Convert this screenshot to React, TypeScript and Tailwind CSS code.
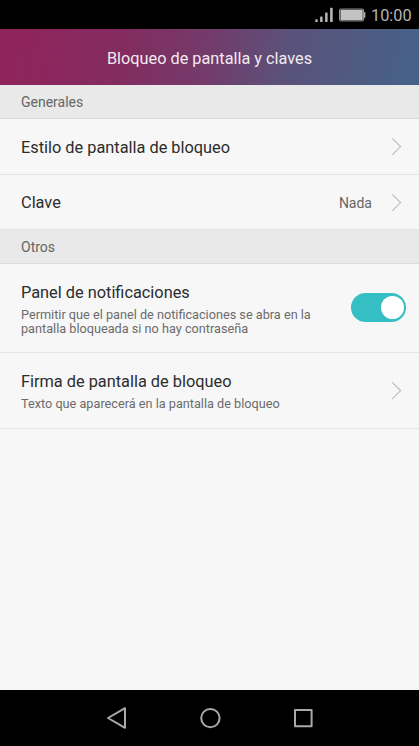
import React from 'react';
import { clsx } from 'clsx';

type SettingRowProps = {
  title: string;
  summary?: string;
  value?: string;
  className?: string;
  children?: React.ReactNode;
};

const Chevron = () => (
  <svg className="h-[19px] w-[11px] shrink-0" viewBox="0 0 11 19" fill="none" aria-hidden="true">
    <path d="M1.2 1.3 9.6 9.6 1.2 17.9" stroke="#b9b9b9" strokeWidth="1.1" />
  </svg>
);

const StatusBar = () => (
  <div className="flex h-[29px] shrink-0 items-center justify-end bg-black pr-[7px] text-[#b5b5b5]">
    <svg className="h-[16px] w-[18px]" viewBox="0 0 18 16" fill="currentColor" aria-hidden="true">
      <rect x="0.3" y="12.2" width="2.4" height="2.8" rx="0.5" />
      <rect x="5.1" y="9.4" width="2.5" height="5.6" rx="0.5" />
      <rect x="10.1" y="5.4" width="2.5" height="9.6" rx="0.5" />
      <rect x="15.1" y="0.8" width="2.6" height="14.2" rx="0.5" />
    </svg>
    <svg className="ml-[6px] h-[14px] w-[27px]" viewBox="0 0 27 14" aria-hidden="true">
      <rect x="0.6" y="1.1" width="24" height="11.8" rx="1" fill="none" stroke="#a5a5a5" strokeWidth="1" />
      <rect x="1.5" y="2" width="22.2" height="10" fill="#c3c3c3" />
      <rect x="25" y="4.2" width="1.4" height="5.6" fill="#a5a5a5" />
    </svg>
    <span className="ml-[5px] mt-[3px] w-[41px] text-[16.3px] leading-none">10:00</span>
  </div>
);

const SectionHeader = ({ label, className }: { label: string; className?: string }) => (
  <div className={clsx('flex items-center border-b border-[#dcdcdc] bg-[#e9e9e9] pt-[2px] pl-[21px] text-[14px] text-[#666]', className)}>
    {label}
  </div>
);

const SettingRow: React.FC<SettingRowProps> = ({ title, summary, value, className, children }) => (
  <div className={clsx('flex items-center justify-between border-b border-[#e3e3e3] pl-[21px]', className)}>
    <div className="w-[300px] pt-[2px]">
      <p className="text-[16.33px] leading-[22px] text-[#2c2c2c]">{title}</p>
      {summary && <p className="mt-[4px] text-[12.7px] leading-[14.5px] text-[#6b6b6b]">{summary}</p>}
    </div>
    <div className="flex items-center">
      {value && <span className="mt-[2px] mr-[19px] text-[14px] text-[#666]">{value}</span>}
      {children}
    </div>
  </div>
);

const Toggle = () => (
  <div role="switch" aria-checked="true" className="mb-px flex h-[29px] w-[55px] items-center justify-end rounded-full bg-[#35bfc4] pr-[2.5px]">
    <div className="h-[22.5px] w-[22.5px] rounded-full bg-white" />
  </div>
);

const NavigationBar = () => (
  <div className="flex h-[56px] shrink-0 items-center justify-center gap-[69px] bg-black">
    <svg className="h-6 w-6" viewBox="0 0 24 24" fill="none" stroke="#a9a9a9" strokeWidth="2" strokeLinejoin="round" aria-hidden="true">
      <path d="M3 12 20 2.2v19.6Z" />
    </svg>
    <svg className="h-6 w-6" viewBox="0 0 24 24" fill="none" stroke="#a9a9a9" strokeWidth="2" aria-hidden="true">
      <circle cx="12.4" cy="12.1" r="9.2" />
    </svg>
    <svg className="h-6 w-6" viewBox="0 0 24 24" fill="none" stroke="#a9a9a9" strokeWidth="2" strokeLinejoin="round" aria-hidden="true">
      <rect x="4" y="4" width="16.6" height="16.2" />
    </svg>
  </div>
);

const App: React.FC = () => {
  return (
    <div className="flex h-[746px] w-[419px] flex-col overflow-hidden bg-[#f7f7f7] font-['Roboto',sans-serif]">
      <StatusBar />
      <header className="flex h-[56px] shrink-0 items-center justify-center bg-[linear-gradient(100deg,#91235c_0%,#832c60_30%,#733b6b_50%,#5a527a_68%,#456289_100%)] pt-[4px] text-[16.3px] text-[#f3eaf0]">
        Bloqueo de pantalla y claves
      </header>

      <main className="flex-1">
        <SectionHeader label="Generales" className="h-[34px]" />
        <SettingRow title="Estilo de pantalla de bloqueo" className="h-[56px] pr-[17px]">
          <Chevron />
        </SettingRow>
        <SettingRow title="Clave" value="Nada" className="h-[55px] border-[#dcdcdc] pr-[17px]">
          <Chevron />
        </SettingRow>

        <SectionHeader label="Otros" className="h-[34px]" />
        <SettingRow
          title="Panel de notificaciones"
          summary="Permitir que el panel de notificaciones se abra en la pantalla bloqueada si no hay contraseña"
          className="h-[89px] pr-[13px]"
        >
          <Toggle />
        </SettingRow>
        <SettingRow
          title="Firma de pantalla de bloqueo"
          summary="Texto que aparecerá en la pantalla de bloqueo"
          className="h-[76px] pr-[17px]"
        >
          <Chevron />
        </SettingRow>
      </main>

      <NavigationBar />
    </div>
  );
};

export default App;
